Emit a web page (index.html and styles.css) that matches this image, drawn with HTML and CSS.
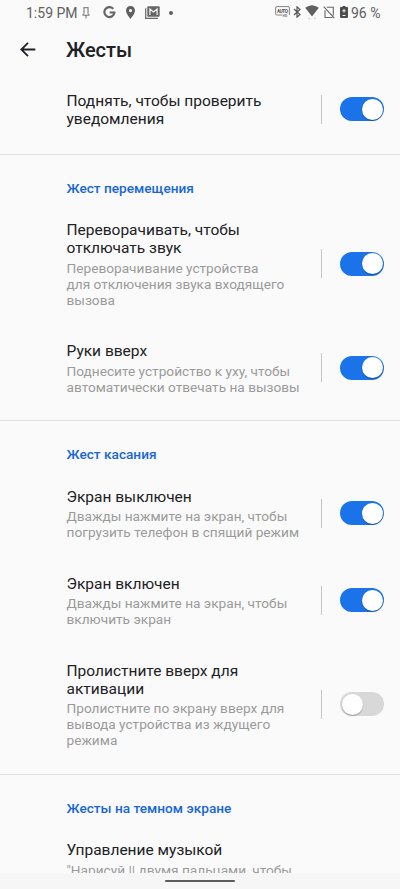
FILE: index.html
```html
<!DOCTYPE html>
<html lang="ru">
<head>
<meta charset="utf-8">
<meta name="viewport" content="width=device-width, initial-scale=1">
<title>Жесты</title>
<link rel="stylesheet" href="styles.css">
</head>
<body>
<div class="screen">
  <div class="status">
    <div class="status-left">
      <span class="time">1:59 PM</span>
      <svg class="pin" width="8" height="12" viewBox="0 0 8 12" fill="none" stroke="#707070" stroke-width="1"><path d="M1.500.7h5M2 .7v5.600L.7 8.200h6.600L6 6.300V.7M4 8.200v3.300"/></svg>
      <svg class="google" width="13" height="13" viewBox="0 0 13 13" fill="none" stroke="#656565" stroke-width="2.200"><path d="M10.300 2.900A5 5 0 1 0 11.400 6.500H6.700"/></svg>
      <svg class="place" width="9" height="13" viewBox="5 2 14 20" fill="#606060"><path d="M12 2C8.130 2 5 5.130 5 9c0 5.250 7 13 7 13s7-7.750 7-13c0-3.870-3.130-7-7-7zm0 9.500a2.500 2.500 0 1 1 0-5 2.500 2.500 0 0 1 0 5z"/></svg>
      <svg class="mail" width="15" height="13" viewBox="0 0 15 13"><path d="M.7 2.300v10h12.200" fill="none" stroke="#666" stroke-width="1.200"/><rect x="2.300" y=".3" width="12.400" height="10.400" rx="1" fill="#666"/><path d="M4.900 9V3l3.600 3 3.600-3v6" fill="none" stroke="#f5f5f5" stroke-width="1.200"/></svg>
      <span class="dot"></span>
    </div>
    <div class="status-right">
      <svg class="auto" width="15" height="12" viewBox="0 0 15 12"><path d="M7 9H2Q.6 9 .6 7.600V2Q.6.600 2 .6h11q1.400 0 1.400 1.400v7" fill="none" stroke="#777" stroke-width=".9"/><text x="2" y="6.800" font-size="4.800" font-weight="700" textLength="11" fill="#555">AUTO</text><text x="7.500" y="11.200" font-size="3.500" font-weight="700" fill="#777">HD</text></svg>
      <svg class="bluetooth" width="8" height="12" viewBox="0 0 8 12" fill="none" stroke="#555" stroke-width="1.200"><path d="M1 3l6 5.500-3 2.700V.8L7 3.500 1 9"/></svg>
      <svg class="wifi" width="14" height="15" viewBox="0 0 14 15"><path d="M.2 2.800Q7-2.300 13.800 2.800L7 11.500z" fill="#606060"/><path d="M3 14.200l1.200-1.500 1.200 1.500zM8.700 12.700h2.400l-1.200 1.500z" fill="#bbb"/></svg>
      <svg class="nosim" width="12" height="13" viewBox="0 0 12 13" fill="none" stroke="#666" stroke-width="1.100"><path d="M3.800 1.300h6.500v8.200M2 4.300v7.200h7.500M.7.700l10.600 11.500"/></svg>
      <svg class="battery" width="8" height="12" viewBox="0 0 8 12"><path d="M2.500 0h3v1H7q1 0 1 1v9q0 1-1 1H1q-1 0-1-1V2q0-1 1-1h1.500z" fill="#4d4d4d"/><path d="M4 3v3.500M2.300 4.800h3.400M2.500 9.500h3" stroke="#f4f4f4" stroke-width="1"/></svg>
      <span class="percent">96 %</span>
    </div>
  </div>
  <header class="appbar">
    <svg class="back" width="16" height="15" viewBox="0 0 16 15" fill="none" stroke="#202124" stroke-width="1.800"><path d="M15.300 7.500H1.500M8 .8L1.300 7.500 8 14.200"/></svg>
    <h1>Жесты</h1>
  </header>
  <main>
    <section class="lead">
      <div class="row"><div class="text"><h3>Поднять, чтобы проверить<br>уведомления</h3></div><span class="bar"></span><span class="switch on"></span></div>
    </section>
    <section>
      <h2>Жест перемещения</h2>
      <div class="row"><div class="text"><h3>Переворачивать, чтобы<br>отключать звук</h3><p>Переворачивание устройства<br>для отключения звука входящего<br>вызова</p></div><span class="bar"></span><span class="switch on"></span></div>
      <div class="row"><div class="text"><h3>Руки вверх</h3><p>Поднесите устройство к уху, чтобы<br>автоматически отвечать на вызовы</p></div><span class="bar"></span><span class="switch on"></span></div>
    </section>
    <section class="touch">
      <h2>Жест касания</h2>
      <div class="row"><div class="text"><h3>Экран выключен</h3><p>Дважды нажмите на экран, чтобы<br>погрузить телефон в спящий режим</p></div><span class="bar"></span><span class="switch on"></span></div>
      <div class="row"><div class="text"><h3>Экран включен</h3><p>Дважды нажмите на экран, чтобы<br>включить экран</p></div><span class="bar"></span><span class="switch on"></span></div>
      <div class="row"><div class="text"><h3>Пролистните вверх для<br>активации</h3><p>Пролистните по экрану вверх для<br>вывода устройства из ждущего<br>режима</p></div><span class="bar"></span><span class="switch"></span></div>
    </section>
    <section>
      <h2>Жесты на темном экране</h2>
      <div class="row"><div class="text"><h3>Управление музыкой</h3><p>"Нарисуй || двумя пальцами, чтобы</p></div></div>
    </section>
  </main>
  <nav><span class="handle"></span></nav>
</div>
</body>
</html>
```

FILE: styles.css
```css
* { box-sizing: border-box; }
body { margin: 0; background: #fafafa; font-family: Roboto, "Noto Sans", sans-serif; color: #202124; }
.screen { width: 400px; height: 889px; display: flex; flex-direction: column; overflow: hidden; }
h1, h2, h3, p { margin: 0; white-space: nowrap; }

.status { height: 25px; flex: none; display: flex; justify-content: space-between; padding: 0 20px 0 26px; color: #606060; font-size: 14px; }
.status-left, .status-right { display: flex; align-items: center; }
.status-right { padding-bottom: 1px; }
.time { width: 52px; white-space: nowrap; }
.pin { margin-left: 4px; }
.google { margin-left: 13px; }
.place { margin-left: 10px; }
.mail { margin-left: 10px; }
.dot { width: 4px; height: 4px; margin-left: 9px; border-radius: 50%; background: #606060; }
.bluetooth { margin-left: 3px; }
.wifi { margin-left: 4px; }
.nosim { margin-left: 4px; }
.battery { margin-left: 5px; }
.percent { margin-left: 3px; padding-top: 1px; width: 29px; white-space: nowrap; }

.appbar { height: 50px; flex: none; display: flex; align-items: center; padding: 0 0 2px 20px; }
h1 { margin-left: 30px; padding-top: 2px; font-size: 20px; font-weight: 500; line-height: 24px; }

main { flex: 1; min-height: 0; overflow: hidden; }
section { padding-bottom: 8px; border-bottom: 1px solid #dfdfdf; }
.lead { height: 80px; }
.touch { padding-bottom: 9px; }
h2 { height: 49px; padding: 25px 0 0 66.500px; font-size: 13.650px; font-weight: 500; line-height: 16px; color: #1967d2; }
.row { display: flex; align-items: center; padding: 17px 16px 17px 66.500px; }
.text { flex: 1; }
h3 { font-size: 15.500px; font-weight: 400; line-height: 18px; }
.touch h3 { margin: 1px 0 -1px; }
p { margin-top: 3px; font-size: 13.670px; line-height: 16px; color: #9a9a9a; }
h3 + p { margin-top: 3px; }
.bar { width: 1px; height: 29px; margin: 0 18px 2px 0; background: #c4c4c4; }
.touch .bar, .touch .switch { margin-bottom: 1px; }
.switch { display: flex; width: 44px; height: 24px; margin-bottom: 2px; padding: 1.500px; border-radius: 12px; background: #d8d8d8; }
.switch::before { content: ""; width: 21px; height: 21px; border-radius: 50%; background: #fff; box-shadow: 0 1px 1px rgba(0, 0, 0, .3); }
.on { justify-content: flex-end; background: #1a73e8; }

nav { height: 16px; flex: none; display: flex; justify-content: center; padding-top: 7px; background: #f6f6f6; }
.handle { width: 70px; height: 2px; border-radius: 1px; background: #5c5c5c; }
```
